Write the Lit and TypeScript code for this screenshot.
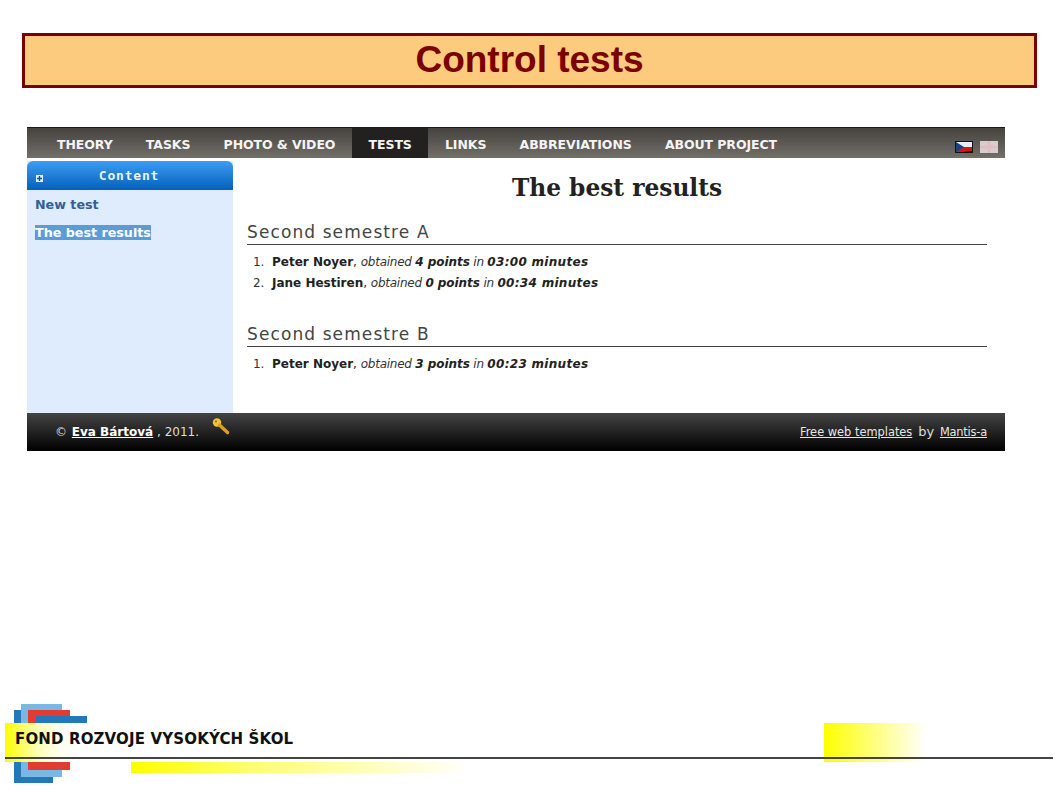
import { LitElement, html, css } from "lit";
import { customElement } from "lit/decorators.js";

const sections = [
  { title: "Second semestre A", rows: [["Peter Noyer", "4 points", "03:00 minutes"], ["Jane Hestiren", "0 points", "00:34 minutes"]] },
  { title: "Second semestre B", rows: [["Peter Noyer", "3 points", "00:23 minutes"]] },
];

@customElement("app-root")
export class AppRoot extends LitElement {
  static styles = css`
    :host { display: block; width: 1058px; height: 793px; background: #fff; position: relative; overflow: hidden; font-family: "DejaVu Sans", sans-serif; }
    .slide-title { box-sizing: border-box; margin: 33px 21px 0 22px; height: 55px; border: 3px solid #7b0000; background: #fccb7e; color: #7b0000; font: bold 37px/47px "Liberation Sans", Arial, sans-serif; text-align: center; }
    .site { box-sizing: border-box; width: 978px; margin: 39px 0 0 27px; }
    nav { height: 31px; box-sizing: border-box; border-top: 1px solid #1c1a18; background: linear-gradient(#46423d, #736f69); display: flex; align-items: stretch; padding-left: 13.4px; }
    nav a { display: flex; align-items: center; padding: 2px 16.6px 0; color: #f4f4f4; font-weight: bold; font-size: 12.5px; letter-spacing: -0.08px; }
    nav a.on { background: #222120; }
    .flags { margin-left: auto; display: flex; gap: 7px; align-items: flex-end; padding: 0 7px 5px 0; }
    .flags svg { display: block; }
    .main { display: flex; height: 255px; }
    aside { width: 206px; background: #deecfd; flex: none; margin-top: 3px; }
    .side-head { height: 29px; box-sizing: border-box; border-radius: 6px 6px 0 0; background: linear-gradient(#3f9cf0, #0261bd); color: #e8f4ff; font: bold 13px/29px "DejaVu Sans Mono", "DejaVu Sans", sans-serif; letter-spacing: 0.8px; position: relative; text-align: center; padding-right: 2px; }
    .plus { position: absolute; left: 9px; top: 14px; width: 7px; height: 7px; background: #e8f2ff; display: flex; }
    .plus svg { display: block; }
    .side-links { display: flex; flex-direction: column; align-items: flex-start; gap: 13px; padding: 7px 8px; font-weight: bold; font-size: 12.7px; line-height: 15px; color: #2f6198; }
    .side-links .sel { background: #5b9bd8; color: #fff; }
    .content { flex: 1; padding: 15px 18px 0 14px; color: #222; }
    h1 { margin: 0 0 18px; font: bold 23.3px/29px "DejaVu Serif", serif; text-align: center; color: #222; }
    h2 { margin: 0; font-weight: normal; font-size: 17px; line-height: 24px; height: 24px; letter-spacing: 1.1px; border-bottom: 1px solid #444; color: #444; }
    ol { margin: 7px 0 28px; padding: 0 0 0 25px; font-size: 12px; line-height: 21px; }
    li::marker { color: #333; content: counter(list-item) ".\\00a0\\00a0"; }
    em { font-weight: normal; color: #333; letter-spacing: -0.25px; }
    em b { color: #222; letter-spacing: -0.05px; }
    em b.time { letter-spacing: 0.3px; }
    .foot { height: 37px; display: flex; align-items: center; background: linear-gradient(#444, #000); color: #ddd; font-size: 12px; padding: 0 18px 1px 28px; }
    .foot a { color: #fff; text-decoration: underline; }
    .foot b { font-weight: bold; }
    .foot .name { margin-left: 1px; }
    .foot .key { margin: -10px 0 0 13px; display: block; }
    .foot .right { margin-left: auto; font-size: 12px; }
    .foot .right a { color: #e6e6e6; font-size: 11.4px; }
    .foot .right a.m { letter-spacing: -0.2px; }
    .foot .by { margin: 0 2px; font-size: 13px; }
    .banner { position: absolute; left: 0; top: 700px; width: 1058px; height: 90px; }
    .banner i { position: absolute; display: block; }
    .b1 { left: 14px; top: 10px; width: 39px; height: 73px; background: #2279b9; }
    .b2 { left: 21px; top: 4px; width: 41px; height: 73px; background: #7ab8e4; }
    .b3 { left: 28px; top: 10px; width: 42px; height: 60px; background: #e03c31; }
    .b4 { left: 36px; top: 16px; width: 51px; height: 26px; background: #2279b9; }
    .y1 { left: 5px; top: 23px; width: 90px; height: 39px; background: linear-gradient(90deg, #ffff00 0, #ffff30 10%, #ffffb0 35%, #fffff0 60%, #fff 85%); }
    .y2 { left: 131px; top: 62px; width: 340px; height: 11px; background: linear-gradient(90deg, #ffff00, #ffff70 35%, #ffffff); }
    .y3 { left: 824px; top: 23px; width: 102px; height: 39px; background: linear-gradient(90deg, #ffff00, #ffffff); }
    .line { left: 5px; top: 57px; width: 1048px; height: 2px; background: #444; }
    .fund { position: absolute; left: 15px; top: 29px; font-weight: bold; font-size: 15px; letter-spacing: 0.15px; line-height: 20px; color: #111; white-space: nowrap; }
  `;

  render() {
    return html`
      <div class="slide-title">Control tests</div>
      <div class="site">
        <nav>
          <a>THEORY</a><a>TASKS</a><a>PHOTO &amp; VIDEO</a><a class="on">TESTS</a><a>LINKS</a><a>ABBREVIATIONS</a><a>ABOUT PROJECT</a>
          <div class="flags">
            <svg width="18" height="12" viewBox="0 0 18 12"><rect width="18" height="12" fill="#111"/><rect x="1" y="1" width="16" height="5" fill="#e8eef8"/><path d="M1 6H17V10L8 11H1Z" fill="#d7141a"/><path d="M1 1 9 6 1 11Z" fill="#11457e"/></svg>
            <svg width="18" height="12" viewBox="0 0 18 12"><rect width="18" height="12" fill="#d4d0d2"/><path d="M0 0 18 12M18 0 0 12" stroke="#ddc8cc" stroke-width="2"/><path d="M9 0V12M0 6H18" stroke="#e3bcc2" stroke-width="2.5"/></svg>
          </div>
        </nav>
        <div class="main">
          <aside>
            <div class="side-head">
              <span class="plus"><svg width="7" height="7" viewBox="0 0 7 7"><path d="M3.5 1V6M1 3.5H6" stroke="#0a4f9a" stroke-width="1.4"/></svg></span>
              Content
            </div>
            <div class="side-links"><span>New test</span><span class="sel">The best results</span></div>
          </aside>
          <div class="content">
            <h1>The best results</h1>
            ${sections.map((s) => html`
              <h2>${s.title}</h2>
              <ol>${s.rows.map((r) => html`<li><b>${r[0]}</b>, <em>obtained <b>${r[1]}</b> in <b class="time">${r[2]}</b></em></li>`)}</ol>
            `)}
          </div>
        </div>
        <div class="foot">
          <span>© <a class="name"><b>Eva Bártová</b></a> , 2011.</span>
          <svg class="key" width="18" height="17" viewBox="0 0 18 17"><circle cx="5" cy="4.5" r="4.2" fill="#f4c430"/><circle cx="4" cy="3.4" r="1" fill="#8a6a14"/><path d="M7.5 7 15.5 14.5" stroke="#dca01c" stroke-width="3.4" stroke-linecap="round"/></svg>
          <span class="right"><a>Free web templates</a> <span class="by">by</span> <a class="m">Mantis-a</a></span>
        </div>
      </div>
      <div class="banner">
        <i class="b1"></i><i class="b2"></i><i class="b3"></i><i class="b4"></i>
        <i class="y1"></i><i class="y2"></i><i class="y3"></i><i class="line"></i>
        <span class="fund">FOND ROZVOJE VYSOKÝCH ŠKOL</span>
      </div>
    `;
  }
}
